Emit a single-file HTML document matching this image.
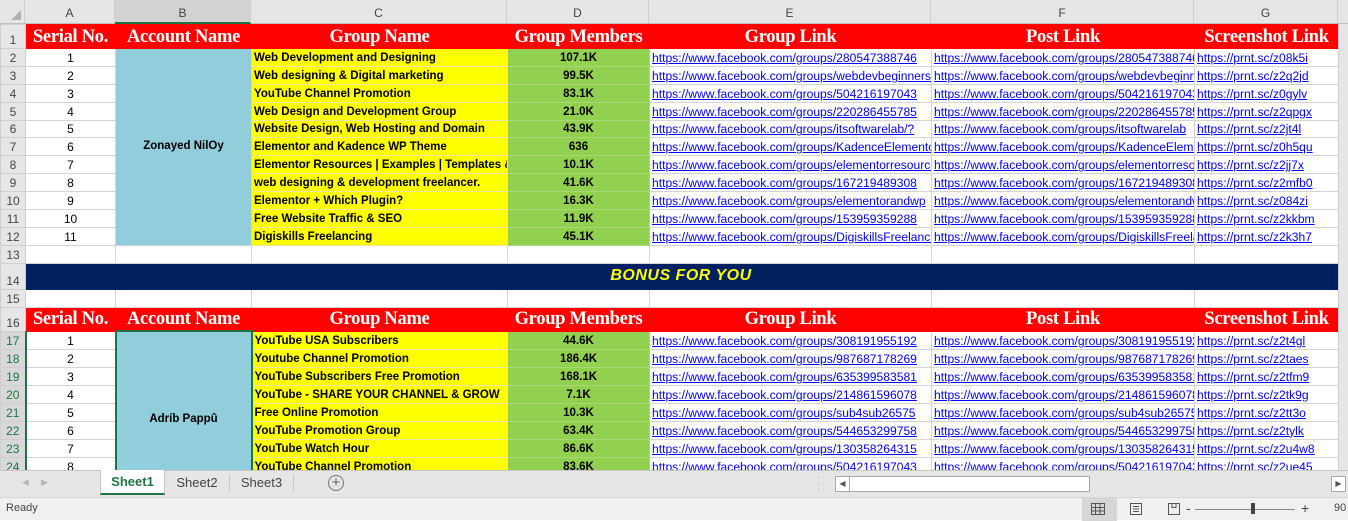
<!DOCTYPE html>
<html><head><meta charset="utf-8"><style>
*{margin:0;padding:0;box-sizing:border-box}
body{width:1348px;height:520px;overflow:hidden;background:#fff;font-family:"Liberation Sans",sans-serif;position:relative}
#ch{position:absolute;top:0;left:0;width:1348px;height:24px;background:#e6e6e6;border-bottom:1px solid #bfbfbf}
#ch div{position:absolute;top:0;height:23px;line-height:26px;text-align:center;font-size:12px;color:#444;border-right:1px solid #cfcfcf}
table{position:absolute;top:24px;left:0;border-collapse:collapse;table-layout:fixed;width:1338px}
td{border:1px solid #d4d4d4;white-space:nowrap;overflow:hidden;font-size:11.5px;padding:0 2px;height:18px;line-height:15px;vertical-align:bottom}
td.rh{background:#e6e6e6;color:#444;text-align:center;font-size:12px;border-color:#cfcfcf;padding:0;vertical-align:bottom}
td.rg{background:#d8d8d8;color:#217346}
tr.h td.c{background:#f00;color:#fff;font-family:"Liberation Serif",serif;font-weight:bold;font-size:18.5px;text-align:center;border-color:#f00;letter-spacing:-0.3px;padding:0;vertical-align:middle;line-height:22px}
tr.h td{height:24px}
td.n{text-align:center;font-size:12px}
td.b{background:#92cddc;text-align:center;font-weight:bold;font-size:11.5px;vertical-align:middle}
td.y{background:#ff0;font-weight:bold;padding-left:2px;border-color:#e8e8a0}
td.g{background:#92d050;font-weight:bold;text-align:center;border-color:#a8d878}
td.l{color:#00f;text-decoration:underline;font-size:12.1px;padding-left:2px}
tr.r td{height:17.9px}
tr.s td{height:18px}
td.bonus{background:#002060;color:#ff0;font-weight:bold;font-style:italic;font-size:16px;text-align:center;height:26px;border-color:#002060;padding-left:0;letter-spacing:0.5px;vertical-align:middle;line-height:22px}
#tabs{position:absolute;top:470px;left:0;width:1348px;height:27px;background:#e6e6e6;border-top:1px solid #c6c6c6}
#status{position:absolute;top:497px;left:0;width:1348px;height:23px;background:#f0f0f0;border-top:1px solid #d6d6d6;font-size:11px;color:#444}
</style></head><body>
<div id="ch">
<div style="left:0;width:25px"><svg width="25" height="23"><polygon points="21,10 21,20 11,20" fill="#b0b0b0"/></svg></div>
<div style="left:25px;width:90px">A</div>
<div style="left:115px;width:136px;background:#d2d2d2;border-bottom:2px solid #217346;height:24px">B</div>
<div style="left:251px;width:256px">C</div>
<div style="left:507px;width:142px">D</div>
<div style="left:649px;width:282px">E</div>
<div style="left:931px;width:263px">F</div>
<div style="left:1194px;width:144px">G</div>
</div>
<table>
<colgroup><col style="width:25px"><col style="width:90px"><col style="width:136px"><col style="width:256px"><col style="width:142px"><col style="width:282px"><col style="width:263px"><col style="width:144px"></colgroup>
<tr class="h"><td class="rh">1</td><td class="c">Serial No.</td><td class="c">Account Name</td><td class="c">Group Name</td><td class="c">Group Members</td><td class="c">Group Link</td><td class="c">Post Link</td><td class="c">Screenshot Link</td></tr>
<tr class="r"><td class="rh">2</td><td class="n">1</td><td class="b" rowspan="11">Zonayed NilOy</td><td class="y">Web Development and Designing</td><td class="g">107.1K</td><td class="l">https://www.facebook.com/groups/280547388746</td><td class="l">https://www.facebook.com/groups/280547388746</td><td class="l">https://prnt.sc/z08k5i</td></tr>
<tr class="r"><td class="rh">3</td><td class="n">2</td><td class="y">Web designing &amp; Digital marketing</td><td class="g">99.5K</td><td class="l">https://www.facebook.com/groups/webdevbeginners</td><td class="l">https://www.facebook.com/groups/webdevbeginners</td><td class="l">https://prnt.sc/z2q2jd</td></tr>
<tr class="r"><td class="rh">4</td><td class="n">3</td><td class="y">YouTube Channel Promotion</td><td class="g">83.1K</td><td class="l">https://www.facebook.com/groups/504216197043</td><td class="l">https://www.facebook.com/groups/504216197043</td><td class="l">https://prnt.sc/z0gylv</td></tr>
<tr class="r"><td class="rh">5</td><td class="n">4</td><td class="y">Web Design and Development Group</td><td class="g">21.0K</td><td class="l">https://www.facebook.com/groups/220286455785</td><td class="l">https://www.facebook.com/groups/220286455785</td><td class="l">https://prnt.sc/z2qpgx</td></tr>
<tr class="r"><td class="rh">6</td><td class="n">5</td><td class="y">Website Design, Web Hosting and Domain</td><td class="g">43.9K</td><td class="l">https://www.facebook.com/groups/itsoftwarelab/?</td><td class="l">https://www.facebook.com/groups/itsoftwarelab</td><td class="l">https://prnt.sc/z2jt4l</td></tr>
<tr class="r"><td class="rh">7</td><td class="n">6</td><td class="y">Elementor and Kadence WP Theme</td><td class="g">636</td><td class="l">https://www.facebook.com/groups/KadenceElementor</td><td class="l">https://www.facebook.com/groups/KadenceElementor</td><td class="l">https://prnt.sc/z0h5qu</td></tr>
<tr class="r"><td class="rh">8</td><td class="n">7</td><td class="y">Elementor Resources | Examples | Templates &amp;</td><td class="g">10.1K</td><td class="l">https://www.facebook.com/groups/elementorresources</td><td class="l">https://www.facebook.com/groups/elementorresources</td><td class="l">https://prnt.sc/z2jj7x</td></tr>
<tr class="r"><td class="rh">9</td><td class="n">8</td><td class="y">web designing &amp; development freelancer.</td><td class="g">41.6K</td><td class="l">https://www.facebook.com/groups/167219489308</td><td class="l">https://www.facebook.com/groups/167219489308</td><td class="l">https://prnt.sc/z2mfb0</td></tr>
<tr class="r"><td class="rh">10</td><td class="n">9</td><td class="y">Elementor + Which Plugin?</td><td class="g">16.3K</td><td class="l">https://www.facebook.com/groups/elementorandwp</td><td class="l">https://www.facebook.com/groups/elementorandwp</td><td class="l">https://prnt.sc/z084zi</td></tr>
<tr class="r"><td class="rh">11</td><td class="n">10</td><td class="y">Free Website Traffic &amp; SEO</td><td class="g">11.9K</td><td class="l">https://www.facebook.com/groups/153959359288</td><td class="l">https://www.facebook.com/groups/153959359288</td><td class="l">https://prnt.sc/z2kkbm</td></tr>
<tr class="r"><td class="rh">12</td><td class="n">11</td><td class="y">Digiskills Freelancing</td><td class="g">45.1K</td><td class="l">https://www.facebook.com/groups/DigiskillsFreelancing</td><td class="l">https://www.facebook.com/groups/DigiskillsFreelancing</td><td class="l">https://prnt.sc/z2k3h7</td></tr>
<tr class="s"><td class="rh">13</td><td></td><td></td><td></td><td></td><td></td><td></td><td></td></tr>
<tr><td class="rh" style="height:26px">14</td><td class="bonus" colspan="7">BONUS FOR YOU</td></tr>
<tr class="s"><td class="rh">15</td><td></td><td></td><td></td><td></td><td></td><td></td><td></td></tr>
<tr class="h"><td class="rh">16</td><td class="c">Serial No.</td><td class="c">Account Name</td><td class="c">Group Name</td><td class="c">Group Members</td><td class="c">Group Link</td><td class="c">Post Link</td><td class="c">Screenshot Link</td></tr>
<tr class="s"><td class="rh rg">17</td><td class="n" style="border-left:2px solid #217346">1</td><td class="b" rowspan="10" style="border:2px solid #217346;vertical-align:top;padding-top:80px">Adríb Pappû</td><td class="y">YouTube USA Subscribers</td><td class="g">44.6K</td><td class="l">https://www.facebook.com/groups/308191955192</td><td class="l">https://www.facebook.com/groups/308191955192</td><td class="l">https://prnt.sc/z2t4gl</td></tr>
<tr class="s"><td class="rh rg">18</td><td class="n" style="border-left:2px solid #217346">2</td><td class="y">Youtube Channel Promotion</td><td class="g">186.4K</td><td class="l">https://www.facebook.com/groups/987687178269</td><td class="l">https://www.facebook.com/groups/987687178269</td><td class="l">https://prnt.sc/z2taes</td></tr>
<tr class="s"><td class="rh rg">19</td><td class="n" style="border-left:2px solid #217346">3</td><td class="y">YouTube Subscribers Free Promotion</td><td class="g">168.1K</td><td class="l">https://www.facebook.com/groups/635399583581</td><td class="l">https://www.facebook.com/groups/635399583581</td><td class="l">https://prnt.sc/z2tfm9</td></tr>
<tr class="s"><td class="rh rg">20</td><td class="n" style="border-left:2px solid #217346">4</td><td class="y">YouTube - SHARE YOUR CHANNEL &amp; GROW</td><td class="g">7.1K</td><td class="l">https://www.facebook.com/groups/214861596078</td><td class="l">https://www.facebook.com/groups/214861596078</td><td class="l">https://prnt.sc/z2tk9g</td></tr>
<tr class="s"><td class="rh rg">21</td><td class="n" style="border-left:2px solid #217346">5</td><td class="y">Free Online Promotion</td><td class="g">10.3K</td><td class="l">https://www.facebook.com/groups/sub4sub26575</td><td class="l">https://www.facebook.com/groups/sub4sub26575</td><td class="l">https://prnt.sc/z2tt3o</td></tr>
<tr class="s"><td class="rh rg">22</td><td class="n" style="border-left:2px solid #217346">6</td><td class="y">YouTube Promotion Group</td><td class="g">63.4K</td><td class="l">https://www.facebook.com/groups/544653299758</td><td class="l">https://www.facebook.com/groups/544653299758</td><td class="l">https://prnt.sc/z2tylk</td></tr>
<tr class="s"><td class="rh rg">23</td><td class="n" style="border-left:2px solid #217346">7</td><td class="y">YouTube Watch Hour</td><td class="g">86.6K</td><td class="l">https://www.facebook.com/groups/130358264315</td><td class="l">https://www.facebook.com/groups/130358264315</td><td class="l">https://prnt.sc/z2u4w8</td></tr>
<tr class="s"><td class="rh rg">24</td><td class="n" style="border-left:2px solid #217346">8</td><td class="y">YouTube Channel Promotion</td><td class="g">83.6K</td><td class="l">https://www.facebook.com/groups/504216197043</td><td class="l">https://www.facebook.com/groups/504216197043</td><td class="l">https://prnt.sc/z2ue45</td></tr>
<tr class="s"><td class="rh rg">25</td><td class="n"></td><td class="y"></td><td class="g"></td><td></td><td></td><td></td></tr>
</table>
<div style="position:absolute;top:24px;left:1338px;width:10px;height:446px;background:#e6e6e6;border-left:1px solid #cfcfcf"></div>
<div id="tabs">
<span style="position:absolute;left:22px;top:6px;color:#b8b8b8;font-size:9px">◀</span>
<span style="position:absolute;left:41px;top:6px;color:#b8b8b8;font-size:9px">▶</span>
<div style="position:absolute;left:100px;top:-1px;width:65px;height:25px;background:#fff;border-bottom:2px solid #217346;border-left:1px solid #c6c6c6;border-right:1px solid #c6c6c6;text-align:center;line-height:24px;color:#217346;font-weight:bold;font-size:13px">Sheet1</div>
<div style="position:absolute;left:165px;top:3px;width:65px;height:18px;border-right:1px solid #c6c6c6;text-align:center;line-height:18px;color:#444;font-size:13px">Sheet2</div>
<div style="position:absolute;left:230px;top:3px;width:64px;height:18px;border-right:1px solid #c6c6c6;text-align:center;line-height:18px;color:#444;font-size:13px">Sheet3</div>
<div style="position:absolute;left:328px;top:4px;width:16px;height:16px;border:1px solid #777;border-radius:50%;text-align:center;line-height:13px;color:#666;font-size:15px">+</div>
<span style="position:absolute;left:817px;top:4px;color:#aaa;font-size:10px;line-height:6px">·<br>·<br>·</span>
<div style="position:absolute;left:835px;top:5px;width:255px;height:16px;background:#fff;border:1px solid #aaa"><span style="position:absolute;left:0;top:0;width:14px;height:14px;border-right:1px solid #aaa;font-size:8px;line-height:14px;text-align:center;color:#555">◀</span></div>
<div style="position:absolute;left:1331px;top:5px;width:15px;height:16px;background:#fff;border:1px solid #aaa;font-size:8px;line-height:14px;text-align:center;color:#555">▶</div>
</div>
<div id="status">
<span style="position:absolute;left:6px;top:4px">Ready</span>
<div style="position:absolute;left:1082px;top:0;width:35px;height:23px;background:#d6d6d6"></div>
<svg style="position:absolute;left:1090px;top:4px" width="16" height="14"><g fill="none" stroke="#555"><rect x="1.5" y="1.5" width="13" height="11"/><path d="M5.5 1.5v11M10 1.5v11M1.5 5.5h13M1.5 9h13"/></g></svg>
<svg style="position:absolute;left:1129px;top:4px" width="14" height="14"><g fill="none" stroke="#555"><rect x="1.5" y="1.5" width="11" height="11"/><path d="M4 4.5h6M4 7h6M4 9.5h6"/></g></svg>
<svg style="position:absolute;left:1167px;top:4px" width="14" height="14"><g fill="none" stroke="#555"><path d="M1.5 1.5h11v11h-11zM5 1.5v4h4v-4"/></g></svg>
<span style="position:absolute;left:1186px;top:2px;font-size:14px;color:#444">-</span>
<div style="position:absolute;left:1195px;top:11px;width:100px;height:1px;background:#888"></div>
<div style="position:absolute;left:1251px;top:5px;width:4px;height:11px;background:#444"></div>
<span style="position:absolute;left:1301px;top:2px;font-size:14px;color:#444">+</span>
<span style="position:absolute;left:1334px;top:4px">90</span>
</div>
</body></html>
